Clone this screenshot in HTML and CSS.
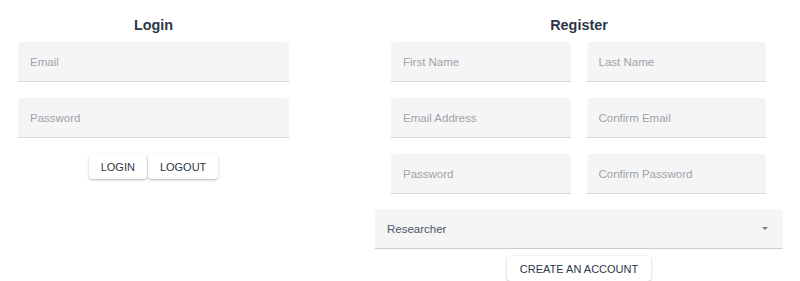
FILE: index.html
```html
<!DOCTYPE html>
<html lang="en">
<head>
<meta charset="utf-8">
<title>Login / Register</title>
<link rel="stylesheet" href="styles.css">
</head>
<body>
<div class="page">
  <section class="panel login">
    <h2 class="title">Login</h2>
    <div class="field"><input type="email" placeholder="Email"></div>
    <div class="field"><input type="password" placeholder="Password"></div>
    <div class="actions">
      <button class="btn">Login</button>
      <button class="btn">Logout</button>
    </div>
  </section>
  <section class="panel register">
    <h2 class="title">Register</h2>
    <div class="row">
      <div class="field"><input type="text" placeholder="First Name"></div>
      <div class="field"><input type="text" placeholder="Last Name"></div>
    </div>
    <div class="row">
      <div class="field"><input type="email" placeholder="Email Address"></div>
      <div class="field"><input type="email" placeholder="Confirm Email"></div>
    </div>
    <div class="row">
      <div class="field"><input type="password" placeholder="Password"></div>
      <div class="field"><input type="password" placeholder="Confirm Password"></div>
    </div>
    <div class="select">
      <span class="select-value">Researcher</span>
      <svg class="caret" width="8" height="5" viewBox="0 0 8 5"><path d="M1 1h6L4 4z" fill="#7b7f86"/></svg>
    </div>
    <div class="actions create">
      <button class="btn">Create an account</button>
    </div>
  </section>
</div>
</body>
</html>
```

FILE: styles.css
```css
* { box-sizing: border-box; }
html, body { margin: 0; padding: 0; background: #ffffff; }
body {
  font-family: "Liberation Sans", Arial, sans-serif;
  color: #2d3748;
  overflow: hidden;
}
.page {
  display: flex;
  padding-left: 18px;
}
.panel {
  display: flex;
  flex-direction: column;
}
.login { width: 271px; }
.register { width: 408px; margin-left: 86px; }
.title {
  margin: 0 0 7px;
  padding-top: 15px;
  font-size: 14.4px;
  line-height: 20px;
  font-weight: bold;
  text-align: center;
  color: #2d3748;
}
.field {
  height: 40px;
  background: #f5f5f5;
  border-bottom: 1px solid #d5d7da;
  border-radius: 4px 4px 0 0;
  margin-bottom: 16px;
  display: flex;
  align-items: center;
}
.field input {
  border: none;
  outline: none;
  background: transparent;
  width: 100%;
  padding: 0 12px;
  font-family: "Liberation Sans", Arial, sans-serif;
  font-size: 11.5px;
  color: #4a5568;
}
.field input::placeholder { color: #9da3ac; opacity: 1; }
.row {
  display: flex;
  gap: 16px;
  padding: 0 17px 0 16px;
}
.row .field { flex: 1; }
.row:nth-of-type(3) .field { margin-bottom: 15px; }
.select {
  height: 40px;
  background: #f5f5f5;
  border-bottom: 1px solid #c9ccd1;
  border-radius: 4px 4px 0 0;
  display: flex;
  align-items: center;
  justify-content: space-between;
  padding: 0 14px 0 12px;
  font-size: 11.5px;
  color: #4a5568;
}
.caret { display: block; }
.actions {
  display: flex;
  justify-content: center;
  gap: 1px;
}
.create { margin-top: 7px; }
.btn {
  height: 25px;
  padding: 0 12px;
  border: none;
  border-radius: 4px;
  background: #ffffff;
  box-shadow: 0 1px 3px rgba(0, 0, 0, 0.22), 0 1px 1px rgba(0, 0, 0, 0.08);
  font-family: "Liberation Sans", Arial, sans-serif;
  font-size: 11px;
  text-transform: uppercase;
  color: #2d3748;
  cursor: pointer;
}
.create .btn { padding: 0 12.5px; }
```
